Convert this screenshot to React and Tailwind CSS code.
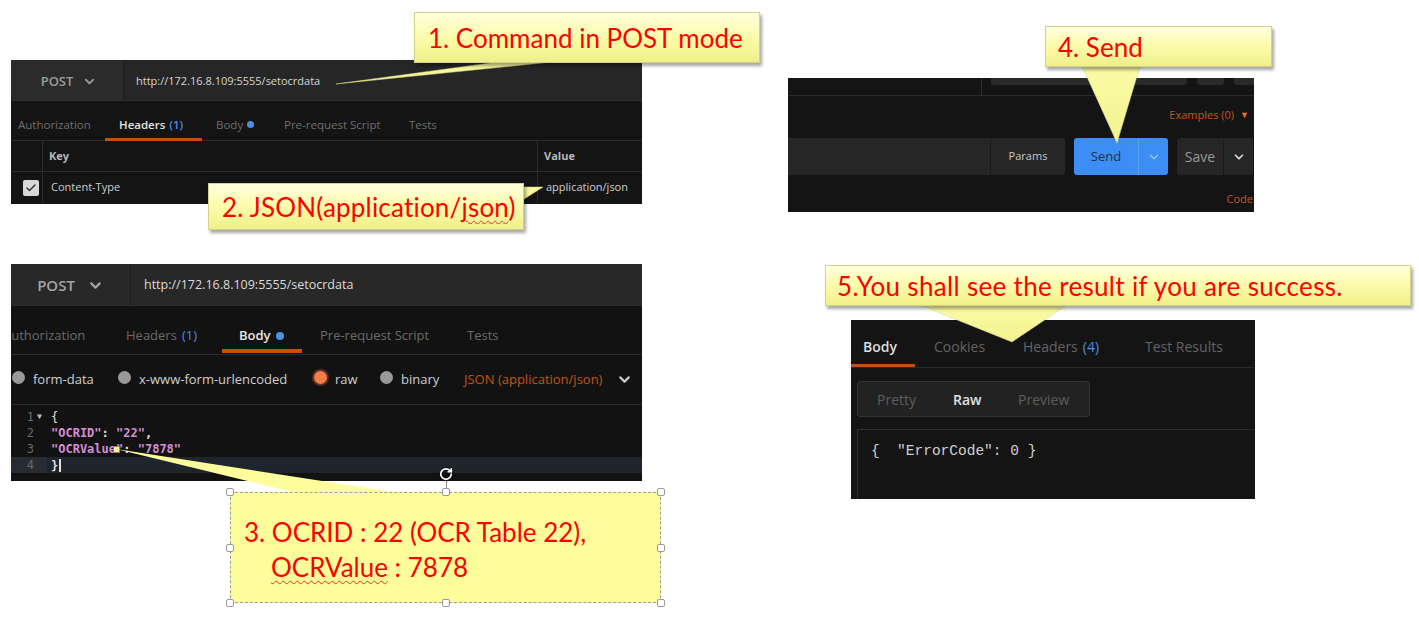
import { Check, ChevronDown, RotateCw } from "lucide-react";

function Callout({ className, children }) {
  return (
    <div
      className={`absolute border border-[#d2d28a] bg-linear-to-b from-[#ffffdc] via-[#fcfcaa] to-[#efef8a] shadow-[2px_3px_3px_rgba(0,0,0,0.35)] font-[Lato,sans-serif] text-[#ff0000] leading-none ${className}`}
    >
      {children}
    </div>
  );
}

function Wavy({ children }) {
  return (
    <span className="underline decoration-wavy decoration-[#e03030] decoration-1 underline-offset-[3px]">
      {children}
    </span>
  );
}

function HeadersPanel() {
  const tabs = [
    { label: "Authorization", w: "w-[94px]", pl: "pl-[7px]" },
    { label: "Headers", count: "(1)", w: "w-[97px]", pl: "pl-[14px]", active: true },
    { label: "Body", dot: true, w: "w-[68px]", pl: "pl-[14px]" },
    { label: "Pre-request Script", w: "w-[125px]", pl: "pl-[14px]" },
    { label: "Tests", w: "w-[60px]", pl: "pl-[14px]" },
  ];
  return (
    <div className="absolute left-[11px] top-[60px] h-[144px] w-[631px] overflow-hidden bg-[#141414] font-['Open_Sans',sans-serif]">
      <div className="flex h-[41px] border-b border-[#2e2e2e] bg-[#262626]">
        <div className="flex w-[113px] items-center justify-center gap-[9px] border-r border-[#1b1b1b] bg-[#2b2b2b] pl-[4px] pt-[3px] text-[13px] font-semibold text-[#9c9c9c]">
          POST <ChevronDown size={15} strokeWidth={3} />
        </div>
        <div className="flex items-center pl-[12px] pt-[3px] text-[11px] text-[#d6d6d6]">
          http://172.16.8.109:5555/setocrdata
        </div>
      </div>
      <div className="flex h-[40px] border-b border-[#2c2c2c] text-[11.5px]">
        {tabs.map((t) => (
          <div
            key={t.label}
            className={`relative flex items-center pt-[8px] ${t.w} ${t.pl} ${t.active ? "font-semibold text-[#e2e2e2]" : "text-[#6e6e6e]"}`}
          >
            {t.label}
            {t.count && <span className="ml-[4px] text-[#4a8fe0]">{t.count}</span>}
            {t.dot && <span className="ml-[4px] h-[7px] w-[7px] rounded-full bg-[#4a90e2]" />}
            {t.active && <div className="absolute bottom-[-1px] left-0 h-[3px] w-full bg-[#c2510f]" />}
          </div>
        ))}
      </div>
      <div className="flex h-[31px] border-b border-[#2c2c2c] text-[11px] font-bold text-[#b8b8b8]">
        <div className="w-[32px] border-r border-[#2c2c2c]" />
        <div className="flex flex-1 items-center pl-[6px]">Key</div>
        <div className="flex w-[105px] items-center border-l border-[#2c2c2c] pl-[6px]">Value</div>
      </div>
      <div className="flex h-[31px] text-[11px] text-[#cfcfcf]">
        <div className="flex w-[32px] items-center border-r border-[#2c2c2c] pl-[12px]">
          <div className="flex h-[16px] w-[16px] items-center justify-center rounded-[2px] bg-[#d8d8d8] text-[#333]">
            <Check size={12} strokeWidth={3} />
          </div>
        </div>
        <div className="flex flex-1 items-center pl-[8px]">Content-Type</div>
        <div className="flex w-[105px] items-center border-l border-[#2c2c2c] pl-[8px]">application/json</div>
      </div>
    </div>
  );
}

function BodyPanel() {
  const tabs = [
    { label: "Authorization", w: "w-[98px]", pl: "-ml-[8px] pl-0" },
    { label: "Headers", count: "(1)", w: "w-[113px]", pl: "pl-[17px]" },
    { label: "Body", dot: true, w: "w-[80px]", pl: "pl-[17px]", active: true },
    { label: "Pre-request Script", w: "w-[165px]", pl: "pl-[18px]" },
    { label: "Tests", w: "w-[60px]", pl: "pl-0" },
  ];
  const radios = [
    { label: "form-data", w: "w-[106px]" },
    { label: "x-www-form-urlencoded", w: "w-[196px]" },
    { label: "raw", w: "w-[66px]", on: true },
    { label: "binary", w: "w-[84px]" },
  ];
  const key = "text-[#d38fd8]";
  return (
    <div className="absolute left-[11px] top-[264px] h-[217px] w-[631px] overflow-hidden bg-[#121212] font-['Open_Sans',sans-serif]">
      <div className="flex h-[42px] border-b border-[#2e2e2e] bg-[#282828]">
        <div className="flex w-[120px] items-center justify-center gap-[12px] border-r border-[#1c1c1c] pt-[2px] text-[15px] font-semibold text-[#a4a4a4]">
          POST <ChevronDown size={17} strokeWidth={3} />
        </div>
        <div className="flex items-center pl-[13px] pt-[2px] text-[12.5px] text-[#dcdcdc]">
          http://172.16.8.109:5555/setocrdata
        </div>
      </div>
      <div className="flex h-[49px] border-b border-[#2c2c2c] text-[13px]">
        {tabs.map((t) => (
          <div key={t.label} className={`relative flex shrink-0 items-center pt-[12px] ${t.w}`}>
            <div className={`flex items-center ${t.pl} ${t.active ? "font-semibold text-[#e6e6e6]" : "text-[#6a6a6a]"}`}>
              {t.label}
              {t.count && <span className="ml-[5px] text-[#4a8fe0]">{t.count}</span>}
              {t.dot && <span className="ml-[5px] h-[8px] w-[8px] rounded-full bg-[#4a90e2]" />}
            </div>
            {t.active && <div className="absolute bottom-[1px] left-0 h-[4px] w-full bg-[#c2510f]" />}
          </div>
        ))}
      </div>
      <div className="flex h-[50px] items-center border-b border-[#2c2c2c] pl-[1px] text-[13px] text-[#cfcfcf]">
        {radios.map((r) => (
          <div key={r.label} className={`flex items-center gap-[8px] ${r.w}`}>
            <span
              className={`-mt-[5px] h-[13px] w-[13px] rounded-full ${r.on ? "bg-[#f27c45] ring-2 ring-[#5a3020]" : "bg-[#999999]"}`}
            />
            <span>{r.label}</span>
          </div>
        ))}
        <div className="flex items-center gap-[14px] text-[#c2540f]">
          JSON (application/json)
          <ChevronDown size={17} strokeWidth={3} className="text-[#cccccc]" />
        </div>
      </div>
      <div className="relative pt-[4px] font-['DejaVu_Sans_Mono',monospace] text-[12px] font-bold leading-[16px]">
        {[
          <span className="font-normal text-[#e0e0e0]">{"{"}</span>,
          <>
            <span className={key}>"OCRID"</span>
            <span className="text-[#e0e0e0]">: </span>
            <span className={key}>"22"</span>
            <span className="text-[#e0e0e0]">,</span>
          </>,
          <>
            <span className={key}>"OCRValue"</span>
            <span className="text-[#e0e0e0]">: </span>
            <span className={key}>"7878"</span>
          </>,
          <span className="text-[#e0e0e0]">
            {"}"}
            <span className="ml-[1px] inline-block h-[13px] w-[2px] translate-y-[2px] bg-[#e0e0e0]" />
          </span>,
        ].map((line, i) => (
          <div key={i} className={`flex h-[16px] ${i === 3 ? "bg-[#1e252c]" : ""}`}>
            <div className={`flex w-[36px] items-center justify-end pr-[3px] font-normal text-[#6a6a6a] ${i === 3 ? "bg-[#272c32]" : ""}`}>
              {i + 1}
              <span className={`ml-[3px] w-[7px] text-[8px] ${i === 0 ? "text-[#bbbbbb]" : "text-transparent"}`}>▼</span>
            </div>
            <div className="whitespace-pre pl-[4px]">{line}</div>
          </div>
        ))}
        <div className="absolute left-[102px] top-[41px] h-[7px] w-[7px] border border-[#8a8a40] bg-[#f8f0a0]" />
      </div>
    </div>
  );
}

function SendPanel() {
  return (
    <div className="absolute left-[788px] top-[78px] h-[134px] w-[466px] overflow-hidden bg-[#141414] font-['Open_Sans',sans-serif]">
      <div className="flex h-[18px] border-b border-[#2b2b2b]">
        <div className="w-[194px] border-r border-[#2e2e2e]" />
        <div className="ml-[9px] h-[7px] w-[197px] rounded-b-[3px] bg-[#2a2a2a]" />
        <div className="ml-[10px] h-[7px] w-[27px] rounded-b-[3px] bg-[#2a2a2a]" />
        <div className="ml-[10px] h-[7px] w-[20px] rounded-bl-[3px] bg-[#2a2a2a]" />
      </div>
      <div className="flex h-[42px] items-center justify-end gap-[6px] pb-[4px] pr-[5px] text-[11px] text-[#c4561b]">
        Examples (0) <span className="text-[9px] text-[#e4712e]">▼</span>
      </div>
      <div className="flex h-[37px] items-stretch">
        <div className="flex w-[277px] rounded-r-[3px] bg-[#262626]">
          <div className="flex-1" />
          <div className="flex w-[75px] items-center justify-center border-l border-[#1a1a1a] text-[11px] text-[#c8c8c8]">
            Params
          </div>
        </div>
        <div className="ml-[9px] flex w-[94px] rounded-[3px] bg-[#3d8ef4]">
          <div className="flex w-[65px] items-center justify-center border-r border-[#5aa0f5] text-[13px] text-[#1c3450]">
            Send
          </div>
          <div className="flex flex-1 items-center justify-center text-[#9cc8ff]">
            <ChevronDown size={14} strokeWidth={2} />
          </div>
        </div>
        <div className="ml-[9px] flex w-[76px] rounded-[3px] bg-[#262626]">
          <div className="flex w-[47px] items-center justify-center border-r border-[#1a1a1a] text-[14px] text-[#9a9a9a]">
            Save
          </div>
          <div className="flex flex-1 items-center justify-center text-[#dddddd]">
            <ChevronDown size={14} strokeWidth={3} />
          </div>
        </div>
      </div>
      <div className="flex h-[37px] items-center justify-end pr-[1px] pt-[12px] text-[11px] text-[#c4561b]">Code</div>
    </div>
  );
}

function ResponsePanel() {
  const tabs = [
    { label: "Body", w: "w-[64px]", pl: "pl-[12px]", active: true },
    { label: "Cookies", w: "w-[88px]", pl: "pl-[19px]" },
    { label: "Headers", count: "(4)", w: "w-[123px]", pl: "pl-[20px]" },
    { label: "Test Results", w: "w-[120px]", pl: "pl-[19px]" },
  ];
  return (
    <div className="absolute left-[851px] top-[320px] h-[179px] w-[404px] overflow-hidden bg-[#141414] font-['Open_Sans',sans-serif]">
      <div className="flex h-[48px] border-b border-[#2b2b2b] text-[14px]">
        {tabs.map((t) => (
          <div
            key={t.label}
            className={`relative flex shrink-0 items-center pt-[6px] ${t.w} ${t.pl} ${t.active ? "font-semibold text-[#dedede]" : "text-[#636363]"}`}
          >
            {t.label}
            {t.count && <span className="ml-[5px] text-[#4a8fe0]">{t.count}</span>}
            {t.active && <div className="absolute bottom-0 left-0 h-[3px] w-full bg-[#c2510f]" />}
          </div>
        ))}
      </div>
      <div className="pl-[6px] pt-[13px]">
        <div className="flex h-[36px] w-[233px] items-center rounded-[3px] border border-[#333] bg-[#222222] text-[14px]">
          <div className="w-[76px] pl-[19px] text-[#5e5e5e]">Pretty</div>
          <div className="w-[80px] pl-[19px] font-semibold text-[#e2e2e2]">Raw</div>
          <div className="pl-[4px] text-[#5e5e5e]">Preview</div>
        </div>
      </div>
      <div className="ml-[6px] mt-[12px] h-[80px] whitespace-pre border-l border-t border-[#2e2e2e] pl-[13px] pt-[11px] font-['Liberation_Mono',monospace] text-[14.5px] text-[#d0d0d0]">
        {'{  "ErrorCode": 0 }'}
      </div>
    </div>
  );
}

function Handle({ className }) {
  return <div className={`absolute h-[8px] w-[8px] rounded-[2px] border border-[#9a9a9a] bg-white ${className}`} />;
}

export default function App() {
  return (
    <div className="relative h-[618px] w-[1419px] overflow-hidden bg-white">
      <HeadersPanel />
      <BodyPanel />
      <SendPanel />
      <ResponsePanel />

      {/* callout tails */}
      <svg className="pointer-events-none absolute left-0 top-0" width="1419" height="618">
        <defs>
          <linearGradient id="tail" x1="0" y1="0" x2="0" y2="1">
            <stop offset="0" stopColor="#fbfba6" />
            <stop offset="1" stopColor="#f2f28e" />
          </linearGradient>
        </defs>
        <polygon points="336,84 505,61 562,61" fill="url(#tail)" stroke="#d6d68c" strokeWidth="0.5" />
        <polygon points="543,187 521,187 521,201" fill="url(#tail)" stroke="#d6d68c" strokeWidth="0.5" />
        <polygon points="116,449 297,493 400,493" fill="#fdfd9c" />
        <polygon points="1117,143 1082,66 1140,66" fill="url(#tail)" stroke="#d6d68c" strokeWidth="0.5" />
        <polygon points="1012,342 920,305 1067,305" fill="url(#tail)" stroke="#d6d68c" strokeWidth="0.5" />
      </svg>

      <Callout className="left-[414px] top-[12px] flex h-[51px] w-[346px] items-center pl-[13px] text-[26px]">
        1. Command in POST mode
      </Callout>
      <Callout className="left-[208px] top-[183px] flex h-[47px] w-[316px] items-center pl-[13px] text-[26px] tracking-[0.2px]">
        <span>
          2. JSON(application/<Wavy>json</Wavy>)
        </span>
      </Callout>
      <Callout className="left-[1045px] top-[26px] flex h-[41px] w-[227px] items-center pl-[12px] text-[26px]">
        4. Send
      </Callout>
      <Callout className="left-[825px] top-[265px] flex h-[41px] w-[586px] items-center pl-[11px] text-[26px] tracking-[0.33px]">
        5.You shall see the result if you are success.
      </Callout>

      {/* selected shape 3 */}
      <div className="absolute left-[230px] top-[492px] h-[111px] w-[431px] border border-dashed border-[#9c9c9c] bg-[#fdfd9c] pl-[13px] pt-[22px] font-[Lato,sans-serif] text-[26px] leading-[35px] text-[#ff0000]">
        <div>3. OCRID : 22 (OCR Table 22),</div>
        <div className="pl-[27px]">
          <Wavy>OCRValue</Wavy> : 7878
        </div>
      </div>
      <div className="absolute left-[446px] top-[481px] h-[11px] w-px bg-[#8a8a8a]" />
      <RotateCw size={14} strokeWidth={3} className="absolute left-[439px] top-[467px] text-white drop-shadow-[0_0_1px_#000]" />
      <Handle className="left-[226px] top-[488px]" />
      <Handle className="left-[442px] top-[488px]" />
      <Handle className="left-[657px] top-[488px]" />
      <Handle className="left-[226px] top-[544px]" />
      <Handle className="left-[657px] top-[544px]" />
      <Handle className="left-[226px] top-[599px]" />
      <Handle className="left-[442px] top-[599px]" />
      <Handle className="left-[657px] top-[599px]" />
    </div>
  );
}
